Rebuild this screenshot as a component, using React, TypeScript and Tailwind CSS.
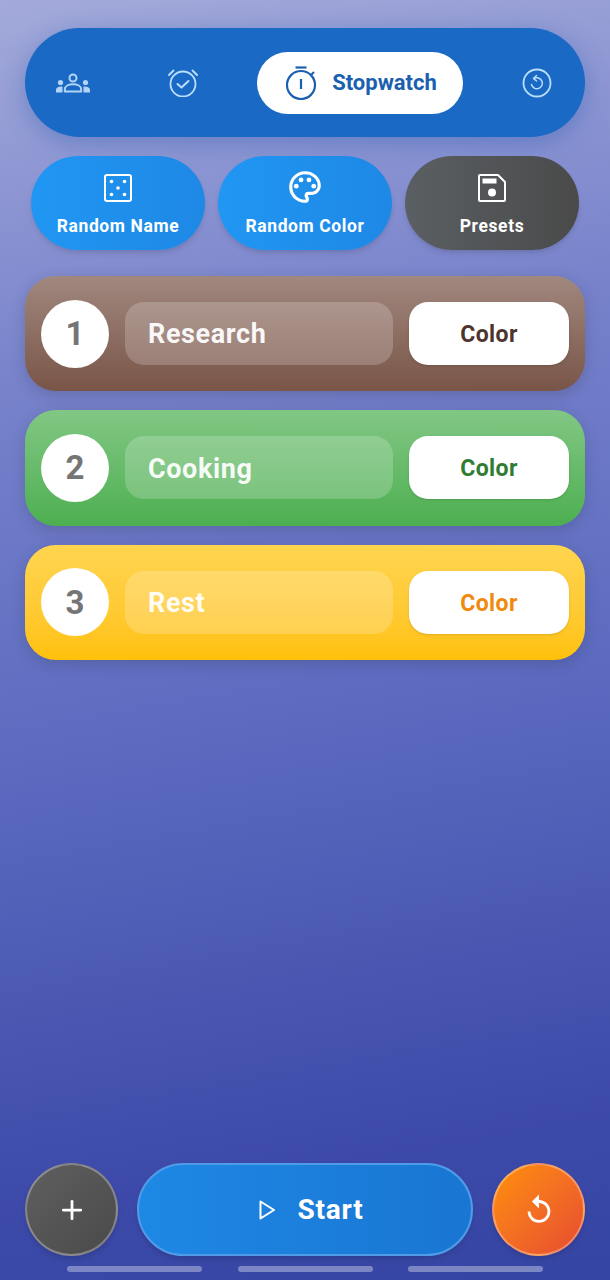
import React from 'react';
import { Plus } from 'lucide-react';
import { MdOutlinePalette, MdReplay } from 'react-icons/md';

const font = { fontFamily: 'Roboto, sans-serif' };

const GroupIcon: React.FC = () => (
    <svg width="34" height="20" viewBox="0 0 34 20" fill="none">
        <circle cx="17" cy="5" r="3.500" stroke="#b3d4f5" strokeWidth="2" />
        <path d="M8.800 18.500v-2c0-3.500 4-5.200 8.200-5.200s8.200 1.700 8.200 5.200v2z" stroke="#b3d4f5" strokeWidth="2" strokeLinejoin="round" />
        <circle cx="4.500" cy="9.500" r="2.600" fill="#b3d4f5" />
        <circle cx="29.500" cy="9.500" r="2.600" fill="#b3d4f5" />
        <path d="M0 19.500v-2.500c0-2 2-3.500 6.500-3.500v6z" fill="#b3d4f5" />
        <path d="M34 19.500v-2.500c0-2-2-3.500-6.500-3.500v6z" fill="#b3d4f5" />
    </svg>
);

const AlarmIcon: React.FC = () => (
    <svg width="30" height="28" viewBox="0 0 30 28" fill="none" stroke="#bbdefb" strokeLinecap="round" strokeLinejoin="round" strokeWidth="1.800">
        <circle cx="15" cy="15" r="12.500" />
        <path d="M9.500 15l4 3.500l7-6.500" strokeWidth="2" />
        <path d="M1 6L5.500 1.500M29 6L24.500 1.500" />
    </svg>
);

const StopwatchIcon: React.FC = () => (
    <svg width="32" height="34" viewBox="0 0 32 34" fill="none" stroke="#1a5fb0" strokeWidth="2.200">
        <circle cx="15" cy="19" r="14" />
        <path d="M9.500 1.500H20.500" />
        <path d="M15 13V23" />
        <path d="M25.500 8.500L28 6" />
    </svg>
);

const DiceIcon: React.FC = () => (
    <svg width="28" height="28" viewBox="0 0 28 28" fill="none">
        <rect x="1" y="1" width="26" height="26" rx="2" stroke="white" strokeWidth="2" />
        <circle cx="7.500" cy="7.500" r="1.800" fill="white" />
        <circle cx="20.500" cy="7.500" r="1.800" fill="white" />
        <circle cx="14" cy="14" r="1.800" fill="white" />
        <circle cx="7.500" cy="20.500" r="1.800" fill="white" />
        <circle cx="20.500" cy="20.500" r="1.800" fill="white" />
    </svg>
);

const SaveIcon: React.FC = () => (
    <svg width="28" height="28" viewBox="0 0 28 28" fill="none">
        <path d="M1 2a1 1 0 0 1 1-1h18l7 7v18a1 1 0 0 1-1 1H2a1 1 0 0 1-1-1z" stroke="white" strokeWidth="2" strokeLinejoin="round" />
        <rect x="4.500" y="4.500" width="14" height="5" fill="white" />
        <circle cx="14" cy="18.500" r="4" fill="white" />
    </svg>
);

const HistoryIcon: React.FC = () => (
    <svg width="30" height="30" viewBox="0 0 30 30" fill="none" stroke="#bbdefb" strokeLinecap="round" strokeLinejoin="round">
        <circle cx="15" cy="15" r="13.500" strokeWidth="1.800" />
        <path d="M9.500 16.500a5.500 5.500 0 1 0 2.500-6" strokeWidth="1.500" />
        <path d="M14.500 7.500L11.500 10.500l3 2.500" strokeWidth="1.500" />
    </svg>
);

const PlayIcon: React.FC = () => (
    <svg width="16" height="20" viewBox="0 0 16 20" fill="none">
        <path d="M1.500 1.500L15 10L1.500 18.500z" stroke="white" strokeWidth="2" strokeLinejoin="round" />
    </svg>
);

const rows = [
    {
        n: 1,
        name: 'Research',
        card: 'bg-gradient-to-b from-[#a1887f] to-[#795548]',
        color: 'text-[#4e342e]',
    },
    {
        n: 2,
        name: 'Cooking',
        card: 'bg-gradient-to-b from-[#81c784] to-[#4caf50]',
        color: 'text-[#2e7d32]',
    },
    {
        n: 3,
        name: 'Rest',
        card: 'bg-gradient-to-b from-[#ffd54f] to-[#ffc107]',
        color: 'text-[#ef8a0e]',
    },
];

const App: React.FC = () => {
    return (
        <div
            style={font}
            className="w-[610px] h-[1280px] overflow-hidden flex flex-col px-[25px] pt-[28px] pb-[8px] bg-[linear-gradient(170deg,#a3aada_0%,#7782cb_28%,#5c6bc0_55%,#3c49a8_88%,#3545a3_100%)]"
        >
            <div className="h-[109px] rounded-[55px] bg-[#1a69c5] shadow-[0_6px_24px_rgba(26,80,170,0.35)] flex items-center">
                <div className="w-[96px] flex justify-center">
                    <GroupIcon />
                </div>
                <div className="w-[124px] flex justify-center">
                    <AlarmIcon />
                </div>
                <div className="ml-[12px] w-[206px] h-[62px] rounded-[31px] bg-white flex items-center justify-center gap-[14px] pl-[3px] text-[#1a5fb0]">
                    <StopwatchIcon />
                    <span className="text-[22px] font-bold">Stopwatch</span>
                </div>
                <div className="ml-[59px]">
                    <HistoryIcon />
                </div>
            </div>

            <div className="mt-[19px] mx-[6px] grid grid-cols-3 gap-[13px]">
                <div className="h-[94px] rounded-[47px] bg-gradient-to-r from-[#2196f3] to-[#1e88e5] shadow-md flex flex-col items-center pt-[18px] text-white">
                    <DiceIcon />
                    <span className="mt-[12px] text-[17.500px] leading-[24px] font-bold tracking-[0.6px] whitespace-nowrap">Random Name</span>
                </div>
                <div className="h-[94px] rounded-[47px] bg-gradient-to-r from-[#2196f3] to-[#1e88e5] shadow-md flex flex-col items-center pt-[12px] text-white">
                    <MdOutlinePalette size={38} />
                    <span className="mt-[8px] text-[17.500px] leading-[24px] font-bold tracking-[0.6px] whitespace-nowrap">Random Color</span>
                </div>
                <div className="h-[94px] rounded-[47px] bg-gradient-to-r from-[#5a5f63] to-[#4a4a4a] shadow-md flex flex-col items-center pt-[18px] text-white">
                    <SaveIcon />
                    <span className="mt-[12px] text-[17.500px] leading-[24px] font-bold tracking-[0.6px]">Presets</span>
                </div>
            </div>

            <div className="mt-[26px] flex flex-col gap-[19.2px]">
                {rows.map((row) => (
                    <div
                        key={row.n}
                        className={`h-[115.2px] rounded-[31px] ${row.card} shadow-[0_4px_14px_rgba(40,40,60,0.22)] flex items-center pl-[16px] pr-[16px]`}
                    >
                        <div className="w-[68px] h-[68px] shrink-0 rounded-full bg-white border-2 border-white/70 flex items-center justify-center text-[33px] font-bold text-[#757575]">
                            {row.n}
                        </div>
                        <div className="ml-[16px] w-[268px] h-[63px] rounded-[19px] bg-white/20 flex items-center px-[23px] pt-[2px] text-[27px] font-bold tracking-[0.6px] text-white/95">
                            {row.name}
                        </div>
                        <div className={`ml-[16px] w-[160px] h-[63px] rounded-[19px] bg-white shadow-sm flex items-center justify-center pt-[3px] text-[23px] font-bold tracking-[0.4px] ${row.color}`}>
                            Color
                        </div>
                    </div>
                ))}
            </div>

            <div className="mt-auto flex items-center justify-between">
                <div className="w-[93px] h-[93px] rounded-full border-2 border-white/30 bg-gradient-to-br from-[#5f5f5f] to-[#4a4a4a] shadow-md flex items-center justify-center text-white">
                    <Plus size={30} strokeWidth={2.200} />
                </div>
                <div className="w-[336px] h-[93px] rounded-[47px] border-2 border-[#4f9be8] bg-gradient-to-r from-[#1e88e5] to-[#1976d2] shadow-md flex items-center justify-center gap-[22px] pl-[13px] text-white">
                    <PlayIcon />
                    <span className="text-[28px] font-bold tracking-[0.8px]">Start</span>
                </div>
                <div className="w-[93px] h-[93px] rounded-full border-2 border-white/30 bg-gradient-to-br from-[#ff8f00] to-[#e64a2e] shadow-md flex items-center justify-center text-white">
                    <MdReplay size={34} />
                </div>
            </div>

            <div className="mt-[10px] mx-[42px] flex justify-between">
                <div className="w-[135px] h-[6px] rounded-[3px] bg-white/35" />
                <div className="w-[135px] h-[6px] rounded-[3px] bg-white/35" />
                <div className="w-[135px] h-[6px] rounded-[3px] bg-white/35" />
            </div>
        </div>
    );
};

export default App;
